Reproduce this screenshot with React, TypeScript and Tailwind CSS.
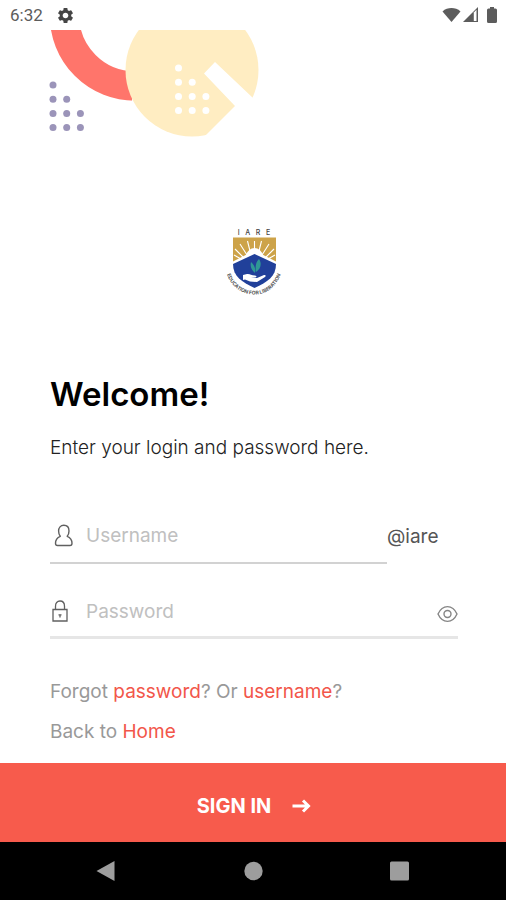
import { useState } from "react"
import type { FormEvent } from "react"
import { MdSettings } from "react-icons/md"

const DOTS = [
    [0, 0],
    [0, 1], [1, 1],
    [0, 2], [1, 2], [2, 2],
    [0, 3], [1, 3], [2, 3],
]

function StatusBar() {
    return (
        <div className="flex h-[30px] items-center justify-between pl-[10px] pr-[9px] text-[#5c5c5c]">
            <div className="flex items-center gap-[13px]">
                <span className="font-[Roboto] text-[17px] leading-5">6:32</span>
                <MdSettings className="size-[19px] text-[#454545]" />
            </div>
            <div className="flex items-center gap-[2px]">
                <svg className="h-4 w-[19px]" viewBox="0 0 19 16" fill="currentColor">
                    <path d="M.5 4.4C5.7 0 13.3 0 18.5 4.4L9.5 15z" />
                </svg>
                <svg className="size-4" viewBox="0 0 16 16" fill="currentColor">
                    <path d="M0 15L15 0v15z" />
                    <path d="M10.8 5.5l2.7-2.7v11.200h-2.700z" fill="#fff" />
                </svg>
                <svg className="ml-[6px] h-4 w-[10px]" viewBox="0 0 10 16" fill="currentColor">
                    <path d="M3 0h4v1.500h1.500q1.500 0 1.500 1.500v11.500q0 1.500-1.500 1.500h-7Q0 16 0 14.500V3q0-1.500 1.500-1.500H3z" />
                </svg>
            </div>
        </div>
    )
}

function HeaderArt() {
    return (
        <svg className="h-[110px] w-[280px]" viewBox="0 30 280 110" aria-hidden="true">
            <circle cx="135" cy="15.500" r="70.500" fill="none" stroke="#ff756b" strokeWidth="29.500" />
            <path d="M132 101.500V0h140v140H205z" fill="#fff" />
            <circle cx="192" cy="70" r="66.500" fill="#ffedc2" />
            <path d="M215 62l38 36 24 22-30 30-42-14 30-30-31-32.500z" fill="#fff" />
            {DOTS.map(([col, row]) => (
                <g key={`${col}-${row}`}>
                    <circle cx={53 + col * 13.7} cy={85 + row * 14.2} r="3.500" fill="#9b94b9" />
                    <circle cx={178.5 + col * 13.7} cy={68 + row * 14.2} r="3.500" fill="#fff" />
                </g>
            ))}
        </svg>
    )
}

function Logo() {
    return (
        <svg className="h-[70px] w-[62px]" viewBox="0 0 62 70" role="img" aria-label="IARE, Education for Liberation">
            <text x="32" y="6.500" textAnchor="middle" fill="#444" className="whitespace-pre font-[Inter] text-[7px] font-medium">I   A   R   E</text>
            <path d="M11 9.500h43v25c0 13-9 20-21.500 26.500C20 54.500 11 47.500 11 34.500z" fill="#cda349" />
            <g stroke="#fff" strokeWidth="1.100">
                <path d="M32.500 25V13M28.500 25l-3-12M36.500 25l3-12M25 27l-7-11M40 27l7-11M21 29l-8-8M44 29l8-8M19 31l-7-4M46 31l7-4" />
            </g>
            <path d="M22.500 31q3-11 10-11t10 11z" fill="#fff" />
            <path d="M11 33.500l21.500-11 21.500 11v3c0 12-9 19-21.500 25.500-12.500-6.500-21.500-13.500-21.500-25.500z" fill="#fff" />
            <path d="M11 36l21.500-10L54 36c0 12.500-8.500 18-21.500 24C20 54 11 48.500 11 36z" fill="#21409a" />
            <path d="M33 45c-4-3-5-7-4-11 3 3 5 6 4 11zM34 44c-1-6 0-10 3-13 3 4 2 10-3 13z" fill="#2f9995" />
            <path d="M21 47l4-1c3-.5 4 1.500 8 1.500 2 .3 2 2 0 2l-4 .2 6 .3 7-3c2-.5 2 1 1 2l-8 5-7-.5-5-2-2 .5z" fill="#fff" />
            <path id="motto" d="M2.500 39C7 57 18 66.500 32 66.500S57 57 61 39" fill="none" />
            <text fill="#555" className="font-[Inter] text-[5px] font-bold">
                <textPath href="#motto" startOffset="50%" textAnchor="middle">EDUCATION FOR LIBERATION</textPath>
            </text>
        </svg>
    )
}

function UserIcon() {
    return (
        <svg className="h-6 w-5" viewBox="0 0 20 24" fill="none" stroke="#606060" strokeWidth="1.400" strokeLinejoin="round">
            <path d="M6.300 12.300C3.300 13.500 1.500 16 1.500 19.200c0 1.600.7 2.300 2 2.300h12.500c1.300 0 2-.7 2-2.300 0-3.200-1.800-5.700-4.800-6.900C14.400 11 15 9.200 15 7c0-3.400-2-5.700-5.200-5.700S4.600 3.600 4.600 7c0 2.200.6 4 1.700 5.300z" />
        </svg>
    )
}

function LockIcon() {
    return (
        <svg className="h-6 w-5" viewBox="0 0 20 24" fill="none" stroke="#606060" strokeWidth="1.300">
            <path d="M3 9.500h14V21H3zM5.500 9.500V6.200C5.500 3 7.200 1 10 1s4.500 2 4.500 5.200v3.300" />
            <path d="M8.500 14.800h3M10 14.800v2.700" />
        </svg>
    )
}

function EyeIcon() {
    return (
        <svg className="h-5 w-[21px]" viewBox="0 0 21 20" fill="none" stroke="#858585" strokeWidth="1.400">
            <path d="M1 10C5.500.2 15.500.2 20 10c-4.500 9.800-14.500 9.800-19 0z" />
            <circle cx="10.500" cy="10" r="3.500" />
        </svg>
    )
}

function NavBar() {
    return (
        <nav className="flex h-[58px] items-center justify-between bg-black px-24" aria-label="System">
            <button type="button" aria-label="Back">
                <svg className="size-5" viewBox="0 0 20 20" fill="#9d9d9d"><path d="M.5 10l18-10v20z" /></svg>
            </button>
            <button type="button" aria-label="Home">
                <svg className="size-5" viewBox="0 0 20 20" fill="#9d9d9d"><circle cx="10.500" cy="10" r="9.200" /></svg>
            </button>
            <button type="button" aria-label="Recent apps">
                <svg className="size-5" viewBox="0 0 20 20" fill="#9d9d9d"><rect y=".5" width="19" height="19" rx="1.500" /></svg>
            </button>
        </nav>
    )
}

export default function App() {
    const [showPassword, setShowPassword] = useState(false)

    const handleSubmit = (e: FormEvent) => {
        e.preventDefault()
    }

    return (
        <div className="flex min-h-screen flex-col bg-white font-[Inter,sans-serif]">
            <StatusBar />
            <HeaderArt />
            <form onSubmit={handleSubmit} className="flex grow flex-col">
                <div className="flex flex-col px-12 pb-4">
                    <div className="mt-[88px] flex justify-center">
                        <Logo />
                    </div>
                    <h1 className="mt-[76px] pl-[2px] text-[33px] font-semibold leading-10 text-black">Welcome!</h1>
                    <p className="mt-5 pl-[2px] text-[19px] font-light leading-7 text-[#222]">Enter your login and password here.</p>

                    <div className="mt-12 flex items-center pl-[2px]">
                        <div className="flex h-[54px] grow items-center gap-3 border-b-2 border-[#d2d2d2] pl-1">
                            <label htmlFor="username" aria-label="Username"><UserIcon /></label>
                            <input id="username" type="text" placeholder="Username" className="w-0 grow text-[19px] leading-7 outline-none placeholder:text-[#c0c0c0]" />
                        </div>
                        <span className="w-[71px] text-[19px] leading-7 text-[#555]">@iare</span>
                    </div>

                    <div className="ml-[2px] mt-6 flex h-[51px] items-center gap-4 border-b-[3px] border-[#e6e6e6]">
                        <label htmlFor="password" aria-label="Password"><LockIcon /></label>
                        <input id="password" type={showPassword ? "text" : "password"} placeholder="Password" className="w-0 grow text-[19px] leading-7 outline-none placeholder:text-[#c0c0c0]" />
                        <button type="button" aria-label="Show password" onClick={() => setShowPassword(!showPassword)} className="pt-1">
                            <EyeIcon />
                        </button>
                    </div>

                    <p className="mt-[39px] pl-[2px] text-[19px] leading-7 text-[#999]">
                        Forgot <a href="#password" className="text-[#f2564a]">password</a>? Or <a href="#username" className="text-[#f2564a]">username</a>?
                    </p>
                    <p className="mt-3 pl-[2px] text-[19px] leading-7 text-[#999]">
                        Back to <a href="#home" className="text-[#f2564a]">Home</a>
                    </p>
                </div>
                <button type="submit" className="mt-auto flex h-[79px] items-center justify-center gap-5 bg-[#f75b4c] pl-[2px] pt-[6px] text-xl font-bold leading-7 text-white">
                    SIGN IN
                    <svg className="size-5" viewBox="0 0 20 20" fill="none" stroke="currentColor" strokeWidth="3">
                        <path d="M1.500 10h16M12 4.500l5.500 5.500-5.500 5.500" />
                    </svg>
                </button>
            </form>
            <NavBar />
        </div>
    )
}
